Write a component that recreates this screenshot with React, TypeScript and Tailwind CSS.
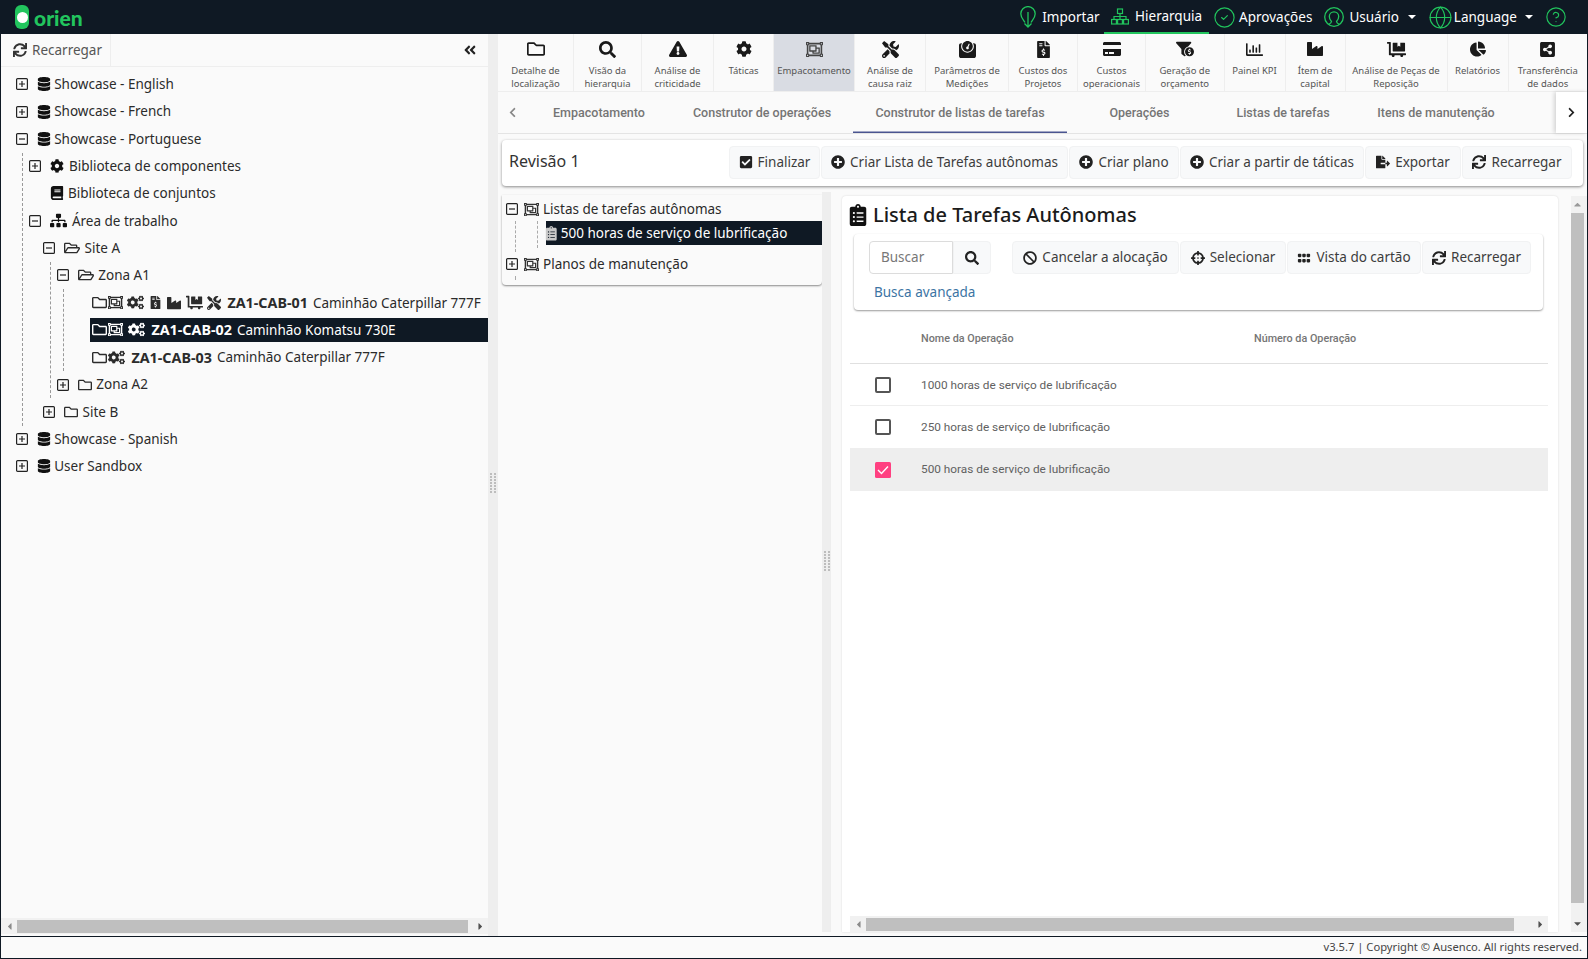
import React from 'react';
import { Globe, CircleCheck, CircleHelp } from 'lucide-react';
import {
  FaAngleDoubleLeft, FaBan, FaBook, FaCaretDown, FaCaretLeft, FaCaretRight, FaCaretUp, FaChartPie, FaCheckSquare,
  FaChevronLeft, FaChevronRight, FaClipboardList, FaCogs, FaCog, FaCreditCard, FaCrosshairs, FaDatabase, FaDollyFlatbed,
  FaExclamationTriangle, FaFileExport, FaFileInvoiceDollar, FaFunnelDollar, FaGripHorizontal, FaIndustry, FaPlusCircle, FaRegChartBar,
  FaRegFolder, FaRegFolderOpen, FaRegObjectGroup, FaSearch, FaShareAltSquare, FaSitemap, FaSync, FaTools, FaWeight,
} from 'react-icons/fa';

const modules = [
  { label: 'Detalhe de localização', w: 'w-[76px]', icon: <FaRegFolder size={18} /> },
  { label: 'Visão da hierarquia', w: 'w-[68px]', icon: <FaSearch size={17} /> },
  { label: 'Análise de criticidade', w: 'w-[72px]', icon: <FaExclamationTriangle size={18} /> },
  { label: 'Táticas', w: 'w-[60px]', icon: <FaCog size={16} /> },
  { label: 'Empacotamento', w: 'w-[81px]', icon: <FaRegObjectGroup size={17} className="text-[#444]" />, active: true },
  { label: 'Análise de causa raiz', w: 'w-[71px]', icon: <FaTools size={17} /> },
  { label: 'Parâmetros de Medições', w: 'w-[83px]', icon: <FaWeight size={17} /> },
  { label: 'Custos dos Projetos', w: 'w-[69px]', icon: <FaFileInvoiceDollar size={17} /> },
  { label: 'Custos operacionais', w: 'w-[68px]', icon: <FaCreditCard size={18} /> },
  { label: 'Geração de orçamento', w: 'w-[78.5px]', icon: <FaFunnelDollar size={18} /> },
  { label: 'Painel KPI', w: 'w-[61px]', icon: <FaRegChartBar size={17} /> },
  { label: 'Ítem de capital', w: 'w-[60px]', icon: <FaIndustry size={16} /> },
  { label: 'Análise de Peças de Reposição', w: 'w-[102px]', icon: <FaDollyFlatbed size={19} /> },
  { label: 'Relatórios', w: 'w-[61px]', icon: <FaChartPie size={16} /> },
  { label: 'Transferência de dados', w: 'w-[79.5px]', icon: <FaShareAltSquare size={17} /> },
];

const tabs = [
  { label: 'Empacotamento', w: 'w-[144px]' },
  { label: 'Construtor de operações', w: 'w-[182px]' },
  { label: 'Construtor de listas de tarefas', w: 'w-[214px]', active: true },
  { label: 'Operações', w: 'w-[145px]' },
  { label: 'Listas de tarefas', w: 'w-[142px]' },
  { label: 'Itens de manutenção', w: 'w-[164px]' },
];

const Expander = ({ open }: { open?: boolean }) => (
  <svg width="12" height="12" viewBox="0 0 12 12" className="shrink-0">
    <rect x="0.6" y="0.6" width="10.8" height="10.8" rx="1" fill="none" stroke="#222" strokeWidth="1.2" />
    <path d={open ? 'M3 6h6' : 'M3 6h6M6 3v6'} stroke="#222" strokeWidth="1.2" />
  </svg>
);

const Row = ({ toggle, icons, children }: { toggle?: 'open' | 'closed'; icons: React.ReactNode; children: React.ReactNode }) => (
  <div className="flex h-[27.3px] items-center whitespace-nowrap text-[13.5px] text-[#2b2b2b]">
    <span className="w-[21px] shrink-0">{toggle && <Expander open={toggle === 'open'} />}</span>
    <span className="flex items-center shrink-0">{icons}</span>
    <span className="ml-[4.5px]">{children}</span>
  </div>
);

const Kids = ({ line = true, children }: { line?: boolean; children: React.ReactNode }) => (
  <div className={`ml-[6.5px] pl-[6.2px] border-l border-dashed ${line ? 'border-[#999]' : 'border-transparent'}`}>{children}</div>
);

const Machine = ({ code, name, icons, selected }: { code: string; name: string; icons: React.ReactNode; selected?: boolean }) => (
  <div className="flex h-[27.3px] items-center">
    <div className={`flex-1 flex h-6 items-center whitespace-nowrap pl-[1.5px] text-[13.5px] ${selected ? 'bg-[#0f1924] text-white' : 'text-[#2b2b2b]'}`}>
      {icons}
      <b className="font-bold text-[14.3px] ml-[6px]">{code}</b>
      <span className="ml-[5px]">{name}</span>
    </div>
  </div>
);

const ToolBtn = ({ icon, label, w }: { icon: React.ReactNode; label: string; w: string }) => (
  <button className={`${w} h-[33px] flex items-center justify-center gap-[5px] rounded bg-[#f8f9fa] border border-[#f1f2f3] text-[13.5px] text-[#3d3d3d] whitespace-nowrap`}>
    {icon}
    {label}
  </button>
);

const Hbar = ({ thumb, w }: { thumb: string; w?: string }) => (
  <div className={`flex items-center h-[16px] bg-[#f1f1f1] shrink-0 ${w ?? ''}`}>
    <span className="w-[16px] flex justify-center text-[#8a8a8a]"><FaCaretLeft size={11} /></span>
    <div className={`h-[13px] bg-[#bfbfbf] ${thumb}`} />
    <span className="flex-1" />
    <span className="w-[16px] flex justify-center text-[#505050]"><FaCaretRight size={11} /></span>
  </div>
);

const Grip = () => (
  <svg width="6" height="22" viewBox="0 0 6 22" className="text-[#bdbdbd]" fill="currentColor">
    {[0, 3, 6, 9, 12, 15, 18].map((y) => (
      <g key={y}>
        <rect x="0" y={y} width="2" height="2" />
        <rect x="4" y={y} width="2" height="2" />
      </g>
    ))}
  </svg>
);

const ImportIcon = () => (
  <svg width="16" height="22" viewBox="0 0 16 22" fill="none" stroke="#21c45d" strokeWidth="1.3">
    <path d="M5 16.5C3 13.500 .8 11.500 .8 7.800a7.200 7.200 0 0 1 14.400 0c0 3.700-2.200 5.700-4.200 8.700" />
    <path d="M8 6v15M4.500 17.500 8 21l3.500-3.500" />
  </svg>
);

const UserIcon = () => (
  <svg width="20" height="20" viewBox="0 0 20 20" fill="none" stroke="#21c45d" strokeWidth="1.3">
    <circle cx="10" cy="10" r="9.300" />
    <path d="M4.500 17.500c2-1 3-1.500 3-3-1.500-1.500-2.200-3-2.200-5a4.700 4.700 0 0 1 9.400 0c0 2-.7 3.500-2.200 5 0 1.500 1 2 3 3" />
  </svg>
);

const HierarchyIcon = () => (
  <svg width="18" height="17" viewBox="0 0 18 17" fill="none" stroke="#21c45d" strokeWidth="1.2">
    <rect x="6.500" y="1" width="5" height="4.500" />
    <rect x="0.600" y="11.500" width="4.800" height="4.500" />
    <rect x="6.600" y="11.500" width="4.800" height="4.500" />
    <rect x="12.600" y="11.500" width="4.800" height="4.500" />
    <path d="M9 5.500v6M3 11.500V8.500h12v3" />
  </svg>
);

const Caret = ({ gap }: { gap: string }) => <span className={`${gap} w-0 h-0 border-x-[4px] border-x-transparent border-t-[4.500px] border-t-white`} />;

const folderIcons = (pack: boolean) => (
  <>
    <FaRegFolder size={15} />
    {pack && <FaRegObjectGroup size={15} className="ml-[1.500px]" />}
  </>
);

const Db = () => <FaDatabase size={14} className="text-[#111] -mr-[1px]" />;

export default function App() {
  return (
    <div className="w-[1588px] h-[959px] flex flex-col overflow-hidden border-x border-b border-[#0f1924] bg-[#fafafa] text-[#2b2b2b] font-['Noto_Sans',sans-serif]">
      {/* top bar */}
      <header className="h-[34px] -mx-px shrink-0 bg-[#0f1924] flex items-center text-white text-[13.5px]">
        <div className="ml-[15px] flex items-center">
          <div className="w-[14px] h-[24px] rounded-[6px] bg-[#22c55e] flex items-center justify-center">
            <span className="w-[11px] h-[11px] rounded-full bg-white" />
          </div>
          <span className="ml-[5px] text-[21px] leading-none font-black text-[#22c55e] font-['Lato',sans-serif]">orien</span>
        </div>
        <nav className="ml-auto mr-[21px] flex items-center h-full">
          <span className="flex items-center gap-[6px]"><ImportIcon />Importar</span>
          <span className="ml-[4.5px] px-[7px] h-full flex items-center gap-[6px] border-b-2 border-[#22c55e]"><HierarchyIcon />Hierarquia</span>
          <span className="ml-[4px] flex items-center gap-[3px]"><CircleCheck size={23} strokeWidth={1.2} color="#21c45d" />Aprovações</span>
          <span className="ml-[12px] flex items-center gap-[5px]"><UserIcon />Usuário</span>
          <Caret gap="ml-[9px]" />
          <span className="ml-[12px] flex items-center gap-[1px]"><Globe size={25} strokeWidth={1.1} color="#21c45d" />Language</span>
          <Caret gap="ml-[8px]" />
          <span className="ml-[12px]"><CircleHelp size={22} strokeWidth={1.25} color="#21c45d" /></span>
        </nav>
      </header>

      <div className="flex-1 flex min-h-0">
        {/* hierarchy pane */}
        <aside className="w-[487px] shrink-0 flex flex-col min-h-0 pb-[2px]">
          <div className="h-[33px] shrink-0 flex items-center border-b border-[#eeeeee] pr-[11px]">
            <div className="h-full w-[110px] flex items-center gap-[5px] pl-[12px] border-r border-[#eeeeee] text-[13.5px] text-[#555]">
              <FaSync size={14} className="text-[#333]" />
              Recarregar
            </div>
            <FaAngleDoubleLeft size={14} className="ml-auto text-[#222]" />
          </div>
          <div className="flex-1 overflow-hidden pl-[14.700px] pt-[3.650px]">
            <Row toggle="closed" icons={<Db />}>Showcase - English</Row>
            <Row toggle="closed" icons={<Db />}>Showcase - French</Row>
            <Row toggle="open" icons={<Db />}>Showcase - Portuguese</Row>
            <Kids>
              <Row toggle="closed" icons={<FaCog size={14} className="text-[#111]" />}>Biblioteca de componentes</Row>
              <Row icons={<FaBook size={14} className="text-[#111] -mr-[1px]" />}>Biblioteca de conjuntos</Row>
              <Row toggle="open" icons={<FaSitemap size={17} className="text-[#111]" />}>Área de trabalho</Row>
              <Kids line={false}>
                <Row toggle="open" icons={<FaRegFolderOpen size={16} />}>Site A</Row>
                <Kids>
                  <Row toggle="open" icons={<FaRegFolderOpen size={16} />}>Zona A1</Row>
                  <Kids>
                    <div className="ml-[20px] overflow-hidden">
                      <Machine code="ZA1-CAB-01" name="Caminhão Caterpillar 777F" icons={<>
                        {folderIcons(true)}
                        <FaCogs size={17} className="ml-[4px]" />
                        <FaFileInvoiceDollar size={13} className="ml-[5px]" />
                        <FaIndustry size={14} className="ml-[5px]" />
                        <FaDollyFlatbed size={17} className="ml-[5px]" />
                        <FaTools size={14} className="ml-[4px]" />
                      </>} />
                      <Machine selected code="ZA1-CAB-02" name="Caminhão Komatsu 730E" icons={<>
                        {folderIcons(true)}
                        <FaCogs size={17} className="ml-[5px]" />
                      </>} />
                      <Machine code="ZA1-CAB-03" name="Caminhão Caterpillar 777F" icons={<>
                        {folderIcons(false)}
                        <FaCogs size={17} className="ml-[1.500px]" />
                      </>} />
                    </div>
                  </Kids>
                  <Row toggle="closed" icons={<FaRegFolder size={14} />}>Zona A2</Row>
                </Kids>
                <Row toggle="closed" icons={<FaRegFolder size={14} />}>Site B</Row>
              </Kids>
            </Kids>
            <Row toggle="closed" icons={<Db />}>Showcase - Spanish</Row>
            <Row toggle="closed" icons={<Db />}>User Sandbox</Row>
          </div>
          <Hbar thumb="w-[451px]" />
        </aside>

        <div className="w-[10px] shrink-0 bg-[#eeeeee] flex items-center justify-center pb-[2px]"><Grip /></div>

        {/* main pane */}
        <main className="flex-1 min-w-0 flex flex-col">
          <div className="h-[57px] shrink-0 flex">
            {modules.map((m) => (
              <div key={m.label} className={`${m.w} shrink-0 flex flex-col items-center border-r border-[#eeeeee] pt-[5px] ${m.active ? 'bg-[#d9dce3]' : ''}`}>
                <span className="h-[20px] flex items-center text-[#1a1a1a]">{m.icon}</span>
                <span className="mt-[4.500px] text-center text-[9.500px] leading-[13.500px] text-[#555] px-[4px]">{m.label}</span>
              </div>
            ))}
          </div>
          <div className="h-[43px] shrink-0 flex items-stretch border-b border-t border-[#e4e4e4] border-t-[#eeeeee] font-['Roboto',sans-serif] text-[12.5px] font-medium text-[#757575]">
            <span className="w-[29px] flex items-center justify-center text-[#888]"><FaChevronLeft size={11} /></span>
            {tabs.map((t) => (
              <span key={t.label} className={`${t.w} pt-[1px] flex items-center justify-center whitespace-nowrap ${t.active ? 'shadow-[inset_0_-1.5px_0_#4a5590]' : ''}`}>{t.label}</span>
            ))}
            <span className="ml-auto w-[31px] flex items-center justify-center bg-white shadow-[-2px_0_4px_rgba(0,0,0,0.15)] text-[#222]"><FaChevronRight size={11} /></span>
          </div>

          <div className="mx-[4px] mt-[6px] h-[46px] shrink-0 rounded bg-white shadow-[0_1px_3px_rgba(0,0,0,0.45)] flex items-center pl-[7px] pr-[11px] pb-[2px]">
            <span className="text-[16px] text-[#333] -mt-[2px]">Revisão 1</span>
            <div className="ml-auto flex gap-[1px]">
              <ToolBtn w="w-[91px]" icon={<FaCheckSquare size={14} className="text-[#222]" />} label="Finalizar" />
              <ToolBtn w="w-[247px]" icon={<FaPlusCircle size={14} className="text-[#222]" />} label="Criar Lista de Tarefas autônomas" />
              <ToolBtn w="w-[110px]" icon={<FaPlusCircle size={14} className="text-[#222]" />} label="Criar plano" />
              <ToolBtn w="w-[184px]" icon={<FaPlusCircle size={14} className="text-[#222]" />} label="Criar a partir de táticas" />
              <ToolBtn w="w-[96px]" icon={<FaFileExport size={14} className="text-[#222]" />} label="Exportar" />
              <ToolBtn w="w-[110px]" icon={<FaSync size={14} className="text-[#222]" />} label="Recarregar" />
            </div>
          </div>

          <div className="flex-1 min-h-0 flex mt-[6px] pb-[4px]">
            {/* package tree */}
            <div className="w-[320px] ml-[4px] shrink-0">
              <div className="h-[90px] mt-[3px] rounded-b bg-[#fafafa] shadow-[0_1px_2px_rgba(0,0,0,0.45)] pl-[4px] pt-[2.300px] text-[13.5px]">
                <div className="flex h-6 items-center">
                  <Expander open />
                  <FaRegObjectGroup size={15} className="ml-[6px] text-[#333]" />
                  <span className="ml-[4px]">Listas de tarefas autônomas</span>
                </div>
                <div className="ml-[9px] h-[31px] pl-[21px] border-l border-dashed border-[#aaa]">
                  <div className="h-[27px] pl-[8px] border-l border-dashed border-[#aaa]">
                    <div className="h-6 flex items-center bg-[#0f1924] text-white whitespace-nowrap">
                      <FaClipboardList size={14.5} className="text-[#c8c8c8] -ml-[1.800px]" />
                      <span className="ml-[2px]">500 horas de serviço de lubrificação</span>
                    </div>
                  </div>
                </div>
                <div className="flex h-6 items-center">
                  <Expander />
                  <FaRegObjectGroup size={15} className="ml-[6px] text-[#333]" />
                  <span className="ml-[4px]">Planos de manutenção</span>
                </div>
                <div className="ml-[9px] h-[4px] border-l border-dashed border-[#aaa]" />
              </div>
            </div>

            <div className="w-[9px] shrink-0 bg-[#eeeeee] flex items-center justify-center"><Grip /></div>

            {/* task list */}
            <div className="flex-1 min-w-0 flex pt-[4px] pl-[11px]">
              <div className="flex-1 min-w-0 flex flex-col bg-white rounded-t shadow-[0_0_2px_rgba(0,0,0,0.15)]">
                <div className="h-[37px] shrink-0 flex items-center pl-[5px] pt-[1px] text-[#111]">
                  <FaClipboardList size={22} />
                  <span className="ml-[4px] text-[20px] font-medium text-[#1b1b1b]">Lista de Tarefas Autônomas</span>
                </div>
                <div className="ml-[12px] mr-[15px] mt-[1px] h-[76px] shrink-0 rounded bg-white shadow-[0_1px_2px_rgba(0,0,0,0.4)] pt-[7px] pl-[15px]">
                  <div className="flex">
                    <div className="w-[84px] h-[33px] rounded-l border border-[#dcdcdc] flex items-center pl-[11px] text-[13.500px] text-[#777]">Buscar</div>
                    <button className="w-[38px] h-[33px] rounded-r bg-[#f8f9fa] border border-[#f1f2f3] flex items-center justify-center text-[#222]"><FaSearch size={14} /></button>
                    <div className="ml-[21px] flex gap-[1px]">
                      <ToolBtn w="w-[167px]" icon={<FaBan size={14} className="text-[#222]" />} label="Cancelar a alocação" />
                      <ToolBtn w="w-[106px]" icon={<FaCrosshairs size={14} className="text-[#222]" />} label="Selecionar" />
                      <ToolBtn w="w-[134px]" icon={<FaGripHorizontal size={14} className="text-[#222]" />} label="Vista do cartão" />
                      <ToolBtn w="w-[109px]" icon={<FaSync size={14} className="text-[#222]" />} label="Recarregar" />
                    </div>
                  </div>
                  <a className="block mt-[8px] ml-[5px] text-[13.500px] leading-[20px] text-[#3c74a3]">Busca avançada</a>
                </div>

                <div className="ml-[8px] mr-[10px] flex-1 min-h-0 font-['Roboto',sans-serif] text-[11.800px] text-[#616161]">
                  <div className="h-[54px] pt-[5px] flex items-center border-b border-[#e0e0e0] font-medium text-[10.800px] text-[#757575]">
                    <span className="w-[71px] shrink-0" />
                    <span className="w-[333px]">Nome da Operação</span>
                    <span>Número da Operação</span>
                  </div>
                  {[
                    { label: '1000 horas de serviço de lubrificação' },
                    { label: '250 horas de serviço de lubrificação' },
                    { label: '500 horas de serviço de lubrificação', checked: true },
                  ].map((r) => (
                    <div key={r.label} className={`h-[42.300px] pt-[1px] flex items-center border-b border-[#eeeeee] ${r.checked ? 'bg-[#eeeeee]' : ''}`}>
                      <span className="w-[71px] shrink-0 pl-[25px]">
                        {r.checked ? (
                          <svg width="16" height="16" viewBox="0 0 16 16">
                            <rect width="16" height="16" rx="1.500" fill="#ff4081" />
                            <path d="M3 8l3.500 3.500L13 4.500" fill="none" stroke="#fff" strokeWidth="1.400" />
                          </svg>
                        ) : (
                          <span className="block w-4 h-4 rounded-[2px] border-2 border-[#555]" />
                        )}
                      </span>
                      <span className="pt-[1px]">{r.label}</span>
                    </div>
                  ))}
                </div>
                <Hbar thumb="w-[648px]" w="w-[698px] ml-[8px]" />
              </div>
              <div className="w-[16px] ml-[13px] shrink-0 flex flex-col bg-[#f1f1f1]">
                <span className="h-[17px] w-[13px] flex items-center justify-center text-[#999]"><FaCaretUp size={11} /></span>
                <div className="h-[690px] w-[13px] bg-[#bfbfbf]" />
                <span className="mt-auto h-[17px] w-[13px] flex items-center justify-center text-[#505050]"><FaCaretDown size={11} /></span>
              </div>
            </div>
          </div>
        </main>
      </div>

      <footer className="h-[22px] -mx-px shrink-0 border-t border-x border-[#0f1924] bg-[#fafafa] flex items-center justify-end pr-[5px] text-[11.200px] text-[#444]">
        v3.5.7 | Copyright © Ausenco. All rights reserved.
      </footer>
    </div>
  );
}
